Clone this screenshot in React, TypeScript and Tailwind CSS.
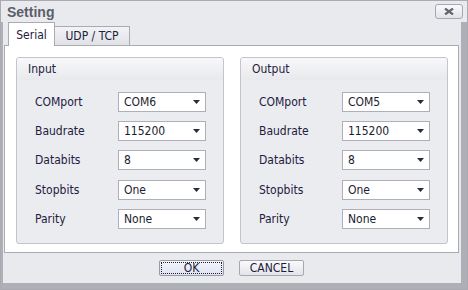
import React from "react";

function Select({ value }: { value: string }) {
  return (
    <div className="w-[88px] h-[20px] bg-white border border-[#aeafb9] flex items-center justify-between pl-[5px] pr-[5px] text-[12px] text-[#1c1c30]">
      <span className="leading-none">{value}</span>
      <svg width="7" height="4" viewBox="0 0 7 4">
        <path d="M0 0H7L3.5 4Z" fill="#2b2b3b" />
      </svg>
    </div>
  );
}

function Group({ title, values }: { title: string; values: string[] }) {
  const labels = ["COMport", "Baudrate", "Databits", "Stopbits", "Parity"];
  return (
    <div className="w-[208px] h-[187px] border border-[#c4c5cc] rounded-[3px] bg-[#ebecf0] flex flex-col overflow-hidden">
      <div className="h-[22px] shrink-0 bg-gradient-to-b from-[#f8f8fa] to-[#e8e9ed] flex items-center pl-[11px] text-[12px] text-[#1f2040]">
        {title}
      </div>
      <div className="flex flex-col gap-[9px] pt-[12px] pl-[18px]">
        {labels.map((l, i) => (
          <div key={l} className={i >= 3 ? "flex items-center h-[20px] mt-[1px] mb-[-1px]" : "flex items-center h-[20px]"}>
            <div className="w-[83px] text-[12px] text-[#1f2040]">{l}</div>
            <Select value={values[i]} />
          </div>
        ))}
      </div>
    </div>
  );
}

export default function App() {
  return (
    <div className="w-[468px] h-[290px] bg-[#e9eaee] border border-[#a9aab2] flex flex-col font-['DejaVu_Sans_Condensed','DejaVu_Sans',sans-serif] select-none">
      {/* title bar */}
      <div className="h-[21px] shrink-0 flex items-center justify-between pl-[6px] pr-[4px]">
        <div className="text-[14px] font-bold text-[#5c5d6b] leading-none font-['Liberation_Sans',Arial,sans-serif]">Setting</div>
        <div className="w-[28px] h-[15px] rounded-[3px] border border-[#a6a7b1] bg-gradient-to-b from-[#fafafc] to-[#e2e3e8] flex items-center justify-center">
          <svg width="10" height="7" viewBox="0 0 10 7">
            <path d="M1 0.5L9 6.5M9 0.5L1 6.5" stroke="#646573" strokeWidth="2.2" />
          </svg>
        </div>
      </div>
      {/* body with frame */}
      <div className="flex-1 flex flex-col border-l-[2px] border-r-[6px] border-b-[6px] border-[#aeafb7]">
        <div className="flex-1 flex flex-col pl-[1px] pr-[2px]">
          {/* tab strip */}
          <div className="h-[23px] shrink-0 flex items-end pl-[4px] relative z-10">
            <div className="h-[24px] mb-[-1px] w-[47px] bg-white border border-b-0 border-[#a9aab2] flex items-center justify-center text-[12px] text-[#1f2040]">
              Serial
            </div>
            <div className="h-[19px] w-[75px] bg-gradient-to-b from-[#f3f3f6] to-[#e1e2e7] border border-l-0 border-b-0 border-[#a9aab2] flex items-center justify-center text-[12px] text-[#1f2040]">
              UDP / TCP
            </div>
          </div>
          {/* tab page */}
          <div className="h-[208px] shrink-0 bg-white border border-[#a9aab2] flex gap-[16px] pl-[11px] pt-[11px]">
            <Group title="Input" values={["COM6", "115200", "8", "One", "None"]} />
            <Group title="Output" values={["COM5", "115200", "8", "One", "None"]} />
          </div>
          {/* buttons */}
          <div className="flex-1 flex items-center justify-center gap-[15px]">
            <div className="w-[65px] h-[16px] rounded-[2px] border border-[#9899a6] bg-gradient-to-b from-[#f4f5fb] to-[#dfe3f3] p-[1px]">
              <div className="w-full h-full border border-dotted border-[#222] flex items-center justify-center text-[12px] text-[#1c1c3c] leading-none">
                OK
              </div>
            </div>
            <div className="w-[65px] h-[16px] rounded-[2px] border border-[#a6a7b1] bg-gradient-to-b from-[#fafafc] to-[#e3e4e9] flex items-center justify-center text-[12px] text-[#1c1c3c] leading-none">
              CANCEL
            </div>
          </div>
        </div>
      </div>
    </div>
  );
}
